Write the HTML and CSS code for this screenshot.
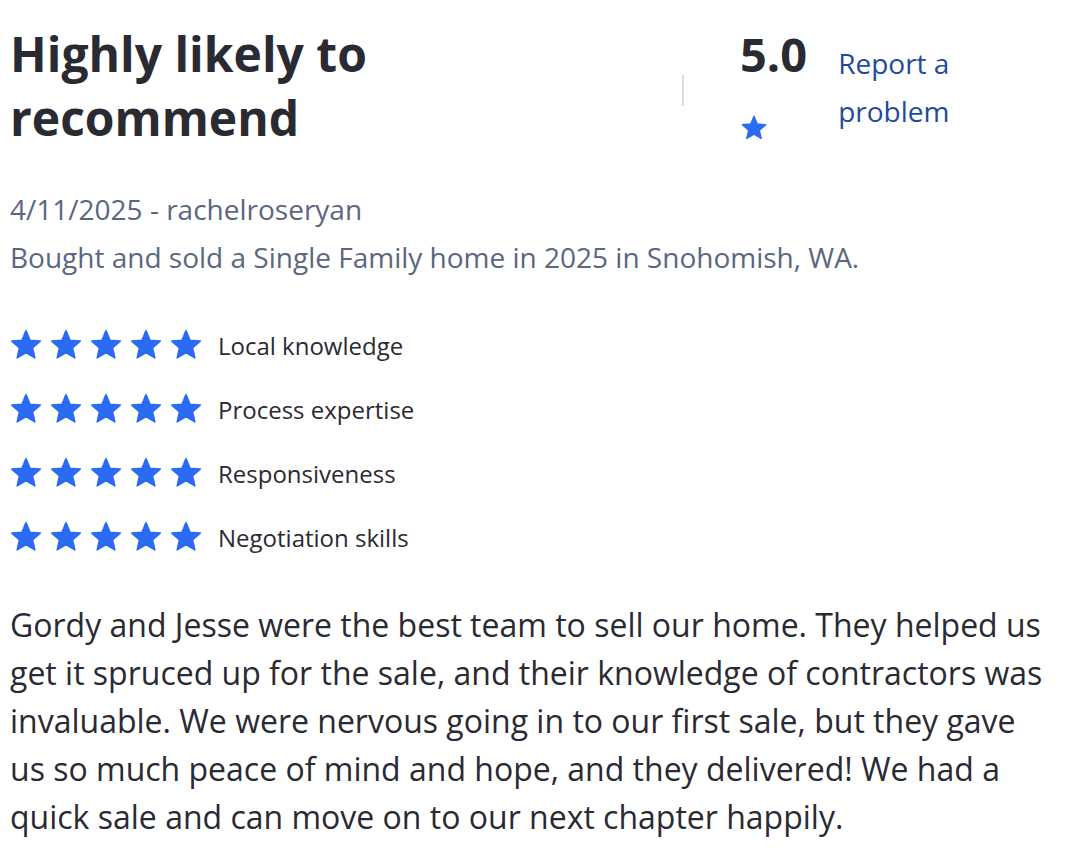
FILE: index.html
```html
<!DOCTYPE html>
<html lang="en">
<head>
<meta charset="utf-8">
<title>Review</title>
<link rel="stylesheet" href="styles.css">
</head>
<body>
<svg width="0" height="0" class="defs" aria-hidden="true">
  <defs>
    <path id="star" d="M12 17.27L18.18 21l-1.64-7.03L22 9.24l-7.19-.61L12 2 9.19 8.63 2 9.24l5.46 4.73L5.82 21z"/>
  </defs>
</svg>
<main class="review">
  <header class="review-head">
    <h1 class="title">Highly likely to recommend</h1>
    <div class="divider"></div>
    <div class="score">
      <div class="score-num">5.0</div>
      <svg class="star star-sm" viewBox="0 0 24 24"><use href="#star"/></svg>
    </div>
    <a class="report" href="#">Report a problem</a>
  </header>

  <div class="meta">
    <div>4/11/2025 - rachelroseryan</div>
    <div>Bought and sold a Single Family home in 2025 in Snohomish, WA.</div>
  </div>

  <ul class="ratings">
    <li class="rating-row">
      <span class="stars">
        <svg class="star" viewBox="0 0 24 24"><use href="#star"/></svg>
        <svg class="star" viewBox="0 0 24 24"><use href="#star"/></svg>
        <svg class="star" viewBox="0 0 24 24"><use href="#star"/></svg>
        <svg class="star" viewBox="0 0 24 24"><use href="#star"/></svg>
        <svg class="star" viewBox="0 0 24 24"><use href="#star"/></svg>
      </span>
      <span class="label">Local knowledge</span>
    </li>
    <li class="rating-row">
      <span class="stars">
        <svg class="star" viewBox="0 0 24 24"><use href="#star"/></svg>
        <svg class="star" viewBox="0 0 24 24"><use href="#star"/></svg>
        <svg class="star" viewBox="0 0 24 24"><use href="#star"/></svg>
        <svg class="star" viewBox="0 0 24 24"><use href="#star"/></svg>
        <svg class="star" viewBox="0 0 24 24"><use href="#star"/></svg>
      </span>
      <span class="label">Process expertise</span>
    </li>
    <li class="rating-row">
      <span class="stars">
        <svg class="star" viewBox="0 0 24 24"><use href="#star"/></svg>
        <svg class="star" viewBox="0 0 24 24"><use href="#star"/></svg>
        <svg class="star" viewBox="0 0 24 24"><use href="#star"/></svg>
        <svg class="star" viewBox="0 0 24 24"><use href="#star"/></svg>
        <svg class="star" viewBox="0 0 24 24"><use href="#star"/></svg>
      </span>
      <span class="label">Responsiveness</span>
    </li>
    <li class="rating-row">
      <span class="stars">
        <svg class="star" viewBox="0 0 24 24"><use href="#star"/></svg>
        <svg class="star" viewBox="0 0 24 24"><use href="#star"/></svg>
        <svg class="star" viewBox="0 0 24 24"><use href="#star"/></svg>
        <svg class="star" viewBox="0 0 24 24"><use href="#star"/></svg>
        <svg class="star" viewBox="0 0 24 24"><use href="#star"/></svg>
      </span>
      <span class="label">Negotiation skills</span>
    </li>
  </ul>

  <p class="body-text">Gordy and Jesse were the best team to sell our home. They helped us get it spruced up for the sale, and their knowledge of contractors was invaluable. We were nervous going in to our first sale, but they gave us so much peace of mind and hope, and they delivered! We had a quick sale and can move on to our next chapter happily.</p>
</main>
</body>
</html>
```

FILE: styles.css
```css
html, body {
  margin: 0;
  padding: 0;
  background: #ffffff;
}

body {
  font-family: "Open Sans", "Noto Sans", sans-serif;
  color: #2a2a33;
  overflow: hidden;
}

.defs {
  position: absolute;
  width: 0;
  height: 0;
}

.review {
  padding: 22px 8px 0 10px;
  width: 1040px;
}

.review-head {
  display: flex;
  align-items: flex-start;
}

.title {
  flex: 0 0 618px;
  margin: 0;
  font-size: 48px;
  font-weight: 700;
  line-height: 64px;
  color: #2a2a33;
}

.divider {
  width: 2px;
  height: 31px;
  margin-left: 54px;
  margin-top: 53px;
  background: #dcdcde;
}

.score {
  display: flex;
  flex-direction: column;
  margin-left: 56px;
  margin-top: 4px;
}

.score-num {
  font-size: 47px;
  font-weight: 700;
  line-height: 56px;
  color: #2a2a33;
}

.star {
  width: 34px;
  height: 34px;
  fill: #2b6af2;
  stroke: #2b6af2;
  stroke-width: 1.2;
  stroke-linejoin: round;
  display: block;
}

.star-sm {
  width: 28px;
  height: 28px;
  margin-top: 32px;
}

.report {
  margin-left: 31px;
  margin-top: 17px;
  width: 125px;
  font-size: 28px;
  line-height: 48px;
  color: #1f4b98;
  text-decoration: none;
}

.meta {
  margin-top: 35px;
  font-size: 28px;
  line-height: 48px;
  color: #5a6780;
}

.ratings {
  list-style: none;
  margin: 32px 0 0 0;
  padding: 0;
}

.rating-row {
  display: flex;
  align-items: center;
  height: 64px;
}

.stars {
  display: flex;
  gap: 6px;
  margin-left: -1px;
}

.label {
  margin-left: 15px;
  font-size: 24px;
  color: #2a2a33;
}

.body-text {
  margin: 32px 0 0 0;
  font-size: 32px;
  line-height: 48px;
  color: #2a2a33;
}
```
